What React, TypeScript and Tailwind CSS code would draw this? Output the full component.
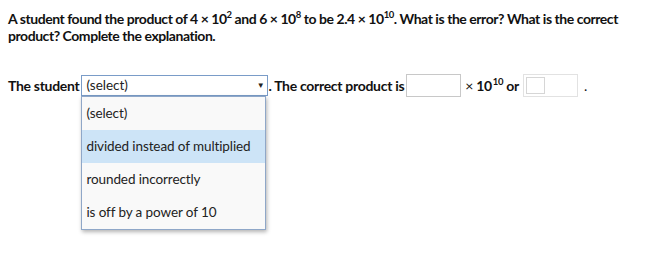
export default function App() {
  const options = [
    "(select)",
    "divided instead of multiplied",
    "rounded incorrectly",
    "is off by a power of 10",
  ];

  return (
    <div
      className="w-[658px] h-[276px] bg-white text-[#111] px-2 pt-[10px]"
      style={{ fontFamily: "Lato, 'Open Sans', sans-serif" }}
    >
      <p className="text-[14px] leading-[17px] font-bold tracking-[-0.45px]">
        A student found the product of 4 × 10
        <span className="relative top-[-6px] text-[9.5px] leading-none">2</span> and 6 × 10
        <span className="relative top-[-6px] text-[9.5px] leading-none">8</span> to be 2.4 × 10
        <span className="relative top-[-6px] text-[9.5px] leading-none">10</span>. What is the
        error? What is the correct product? Complete the explanation.
      </p>

      <div className="mt-[30px] flex items-center text-[14px] font-bold tracking-[-0.3px] h-[22px]">
        <span>The student</span>
        <div className="relative ml-[2px]">
          <div className="w-[187px] h-[21px] border border-[#7a9cc8] bg-white flex items-center justify-between pl-[4px] pr-[3px]">
            <span className="font-normal text-[13.5px] tracking-normal text-[#222]">(select)</span>
            <span className="text-[8px] text-[#222]">▼</span>
          </div>
          <ul className="absolute left-0 top-[21px] w-[185px] border border-[#8fa7c8] bg-[#f9f9f9] shadow-[1px_2px_4px_rgba(0,0,0,0.3)] z-10">
            {options.map((o, i) => (
              <li
                key={o}
                className={`h-[33px] flex items-center px-[4px] font-normal text-[13.5px] tracking-[-0.1px] text-[#222] ${
                  i === 1 ? "bg-[#cde4f7]" : ""
                }`}
              >
                {o}
              </li>
            ))}
          </ul>
        </div>
        <span>. The correct product is</span>
        <div className="ml-[2px] w-[55px] h-[23px] border border-[#c8c8c8] bg-white" />
        <span className="ml-[4px] whitespace-nowrap">
          <span className="font-normal">×</span> 10
          <span className="relative top-[-6px] text-[9.5px] leading-none ml-[1px]">10</span> or
        </span>
        <div className="ml-[4px] w-[55px] h-[23px] border border-[#e2e2e2] bg-white p-[2px] flex items-end">
          <div className="w-[19px] h-[17px] border border-[#d6d6d6]" />
        </div>
        <span className="ml-[6px] font-normal">.</span>
      </div>
    </div>
  );
}
